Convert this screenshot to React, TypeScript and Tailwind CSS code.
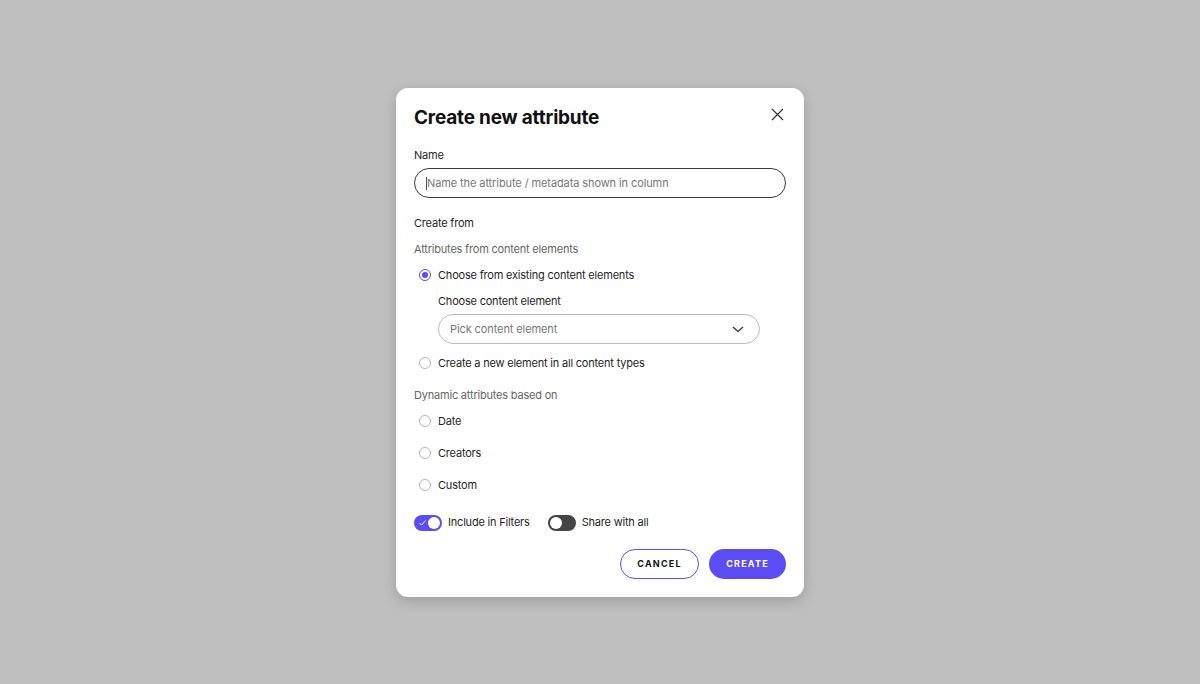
import React from "react";

function Radio({ checked }: { checked?: boolean }) {
  return (
    <span
      className={
        "flex h-[12px] w-[12px] items-center justify-center rounded-full border bg-white " +
        (checked ? "border-[#5b4cf5]" : "border-[#b5b5b5]")
      }
    >
      {checked && <span className="h-[6px] w-[6px] rounded-full bg-[#5b4cf5]" />}
    </span>
  );
}

function RadioRow({ label, checked }: { label: string; checked?: boolean }) {
  return (
    <div className="flex h-[16px] items-center gap-[7px] pl-[5px] text-[11px] tracking-[-0.2px] text-[#1f1f1f]">
      <Radio checked={checked} />
      <span>{label}</span>
    </div>
  );
}

export default function App() {
  return (
    <div
      className="flex h-[684px] w-full items-center justify-center bg-[#bfbfbf]"
      style={{ fontFamily: "Inter, 'Noto Sans', sans-serif" }}
    >
      <div className="relative mt-[1px] w-[408px] rounded-[12px] bg-white px-[18px] pb-[18px] pt-[18px] shadow-[0_4px_14px_rgba(0,0,0,0.18)]">
        <button className="absolute right-[20px] top-[20px] text-[#333]">
          <svg width="13" height="13" viewBox="0 0 13 13" fill="none" stroke="currentColor" strokeWidth="1.2">
            <path d="M1 1L12 12M12 1L1 12" />
          </svg>
        </button>
        <h1 className="text-[19px] font-bold leading-[24px] tracking-[-0.2px] text-[#111]">Create new attribute</h1>

        <div className="mt-[18px] text-[11px] leading-[14px] tracking-[-0.2px] text-[#1f1f1f]">Name</div>
        <div className="mt-[6px] flex h-[30px] items-center rounded-full border border-[#3a3a3a] px-[11px]">
          <span className="h-[13px] w-px bg-[#555]" />
          <span className="text-[11px] tracking-[-0.1px] text-[#777]">Name the attribute / metadata shown in column</span>
        </div>

        <div className="mt-[18px] text-[11px] leading-[14px] tracking-[-0.2px] text-[#1f1f1f]">Create from</div>
        <div className="mt-[12px] text-[11px] leading-[14px] tracking-[-0.2px] text-[#666]">Attributes from content elements</div>

        <div className="mt-[11px]">
          <RadioRow label="Choose from existing content elements" checked />
        </div>
        <div className="ml-[24px] mt-[11px] text-[11px] leading-[14px] tracking-[-0.2px] text-[#1f1f1f]">Choose content element</div>
        <div className="ml-[24px] mr-[26px] mt-[6px] flex h-[30px] items-center justify-between rounded-full border border-[#bdbdbd] pl-[11px] pr-[15px]">
          <span className="text-[11px] tracking-[-0.1px] text-[#777]">Pick content element</span>
          <svg width="12" height="7" viewBox="0 0 12 7" fill="none" stroke="#333" strokeWidth="1.3">
            <path d="M1 1L6 5.5L11 1" />
          </svg>
        </div>
        <div className="mt-[11px]">
          <RadioRow label="Create a new element in all content types" />
        </div>

        <div className="mt-[17px] text-[11px] leading-[14px] tracking-[-0.2px] text-[#666]">Dynamic attributes based on</div>
        <div className="mt-[11px] flex flex-col gap-[16px]">
          <RadioRow label="Date" />
          <RadioRow label="Creators" />
          <RadioRow label="Custom" />
        </div>

        <div className="mt-[21px] flex items-center text-[11px] tracking-[-0.2px] text-[#1f1f1f]">
          <span className="relative flex h-[16px] w-[28px] items-center rounded-full bg-[#5b4cf5]">
            <svg className="absolute left-[5px] top-[5px]" width="7" height="6" viewBox="0 0 7 6" fill="none" stroke="white" strokeWidth="1">
              <path d="M0.5 3L2.5 5L6.5 0.5" />
            </svg>
            <span className="absolute right-[2px] h-[12px] w-[12px] rounded-full bg-white" />
          </span>
          <span className="ml-[6px]">Include in Filters</span>
          <span className="relative ml-[18px] flex h-[16px] w-[28px] items-center rounded-full bg-[#444]">
            <span className="absolute left-[2px] h-[12px] w-[12px] rounded-full bg-white" />
          </span>
          <span className="ml-[6px]">Share with all</span>
        </div>

        <div className="mt-[18px] flex justify-end gap-[10px]">
          <button className="flex h-[30px] w-[79px] items-center justify-center rounded-full border-[1.5px] border-[#5b4cf5] bg-white text-[9px] font-bold tracking-[1.2px] text-[#111]">
            CANCEL
          </button>
          <button className="flex h-[30px] w-[77px] items-center justify-center rounded-full bg-[#5b4cf5] text-[9px] font-bold tracking-[1.2px] text-white">
            CREATE
          </button>
        </div>
      </div>
    </div>
  );
}
